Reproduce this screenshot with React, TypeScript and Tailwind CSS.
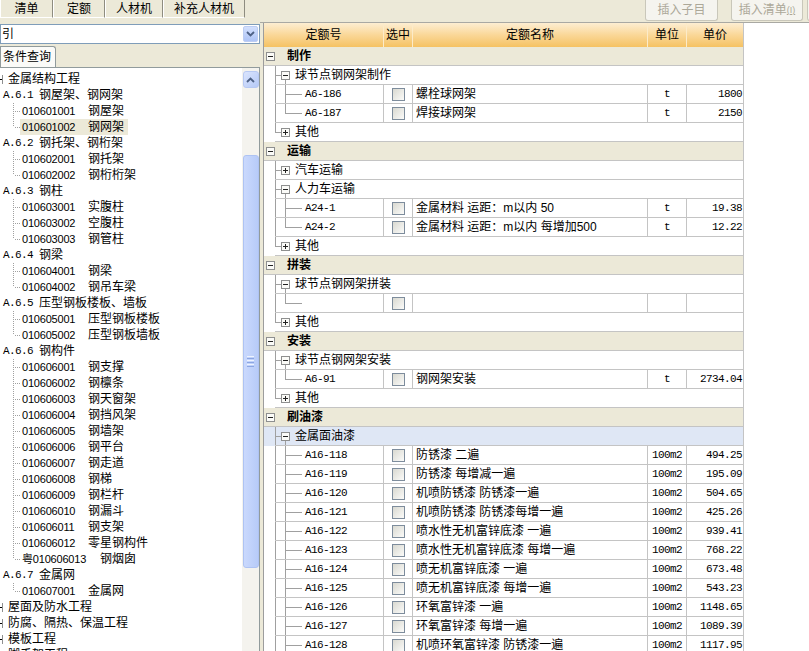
import React from "react";

type GridRow =
  | { k: "g"; name: string }
  | { k: "s"; name: string; plus?: boolean; last?: boolean; sel?: boolean }
  | { k: "l"; code: string; name: string; unit: string; price: string; last?: boolean };

type TreeRow =
  | { k: "top"; text: string }
  | { k: "ch"; code: string; text: string }
  | { k: "leaf"; code: string; text: string; last?: boolean; sel?: boolean };

const paint: [string, string, string][] = [
  ["A16-118", "防锈漆 二遍", "494.25"],
  ["A16-119", "防锈漆 每增减一遍", "195.09"],
  ["A16-120", "机喷防锈漆 防锈漆一遍", "504.65"],
  ["A16-121", "机喷防锈漆 防锈漆每增一遍", "425.26"],
  ["A16-122", "喷水性无机富锌底漆 一遍", "939.41"],
  ["A16-123", "喷水性无机富锌底漆 每增一遍", "768.22"],
  ["A16-124", "喷无机富锌底漆 一遍", "673.48"],
  ["A16-125", "喷无机富锌底漆 每增一遍", "543.23"],
  ["A16-126", "环氧富锌漆 一遍", "1148.65"],
  ["A16-127", "环氧富锌漆 每增一遍", "1089.39"],
  ["A16-128", "机喷环氧富锌漆 防锈漆一遍", "1117.95"],
];

const gridRows: GridRow[] = [
  { k: "g", name: "制作" },
  { k: "s", name: "球节点钢网架制作" },
  { k: "l", code: "A6-186", name: "螺栓球网架", unit: "t", price: "1800" },
  { k: "l", code: "A6-187", name: "焊接球网架", unit: "t", price: "2150", last: true },
  { k: "s", name: "其他", plus: true, last: true },
  { k: "g", name: "运输" },
  { k: "s", name: "汽车运输", plus: true },
  { k: "s", name: "人力车运输" },
  { k: "l", code: "A24-1", name: "金属材料 运距：m以内 50", unit: "t", price: "19.38" },
  { k: "l", code: "A24-2", name: "金属材料 运距：m以内 每增加500", unit: "t", price: "12.22", last: true },
  { k: "s", name: "其他", plus: true, last: true },
  { k: "g", name: "拼装" },
  { k: "s", name: "球节点钢网架拼装" },
  { k: "l", code: "", name: "", unit: "", price: "", last: true },
  { k: "s", name: "其他", plus: true, last: true },
  { k: "g", name: "安装" },
  { k: "s", name: "球节点钢网架安装" },
  { k: "l", code: "A6-91", name: "钢网架安装", unit: "t", price: "2734.04", last: true },
  { k: "s", name: "其他", plus: true, last: true },
  { k: "g", name: "刷油漆" },
  { k: "s", name: "金属面油漆", sel: true },
  ...paint.map(([code, name, price]) => ({ k: "l" as const, code, name, unit: "100m2", price })),
];

const chapters: [string, string, [string, string][]][] = [
  ["A.6.1", "钢屋架、钢网架", [["010601001", "钢屋架"], ["010601002", "钢网架"]]],
  ["A.6.2", "钢托架、钢桁架", [["010602001", "钢托架"], ["010602002", "钢桁桁架"]]],
  ["A.6.3", "钢柱", [["010603001", "实腹柱"], ["010603002", "空腹柱"], ["010603003", "钢管柱"]]],
  ["A.6.4", "钢梁", [["010604001", "钢梁"], ["010604002", "钢吊车梁"]]],
  ["A.6.5", "压型钢板楼板、墙板", [["010605001", "压型钢板楼板"], ["010605002", "压型钢板墙板"]]],
  [
    "A.6.6",
    "钢构件",
    [
      ["010606001", "钢支撑"],
      ["010606002", "钢檩条"],
      ["010606003", "钢天窗架"],
      ["010606004", "钢挡风架"],
      ["010606005", "钢墙架"],
      ["010606006", "钢平台"],
      ["010606007", "钢走道"],
      ["010606008", "钢梯"],
      ["010606009", "钢栏杆"],
      ["010606010", "钢漏斗"],
      ["010606011", "钢支架"],
      ["010606012", "零星钢构件"],
      ["粤010606013", "钢烟囱"],
    ],
  ],
  ["A.6.7", "金属网", [["010607001", "金属网"]]],
];

const treeRows: TreeRow[] = [
  { k: "top", text: "金属结构工程" },
  ...chapters.flatMap(([code, text, leaves]) => [
    { k: "ch" as const, code, text },
    ...leaves.map(([c, t], i) => ({
      k: "leaf" as const,
      code: c,
      text: t,
      last: i === leaves.length - 1,
      sel: c === "010601002",
    })),
  ]),
  { k: "top", text: "屋面及防水工程" },
  { k: "top", text: "防腐、隔热、保温工程" },
  { k: "top", text: "模板工程" },
  { k: "top", text: "脚手架工程" },
];

const Box = ({ plus }: { plus?: boolean }) => (
  <svg width="9" height="9" className="shrink-0">
    <rect x="0.5" y="0.5" width="8" height="8" fill="#fbfbf8" stroke="#8e8f8f" />
    <line x1="2" y1="4.5" x2="7" y2="4.5" stroke="#222" />
    {plus && <line x1="4.5" y1="2" x2="4.5" y2="7" stroke="#222" />}
  </svg>
);

const GroupLine = ({ name }: { name: string }) => (
  <div className="flex h-[19px] items-center border-b border-[#c4c4c4] bg-[#ece9d8] pl-[2px]">
    <Box />
    <span className="ml-[12px] font-bold">{name}</span>
  </div>
);

const SubLine = ({ name, plus, last, sel }: { name: string; plus?: boolean; last?: boolean; sel?: boolean }) => (
  <div className={sel ? "flex h-[19px] bg-[#dfe7f5]" : "flex h-[19px]"}>
    <div className="w-[11px] shrink-0" />
    <div className="flex flex-1 items-center border-b border-[#c4c4c4]">
      <svg width="20" height="18" className="shrink-0">
        <line x1="0.5" y1="0" x2="0.5" y2={last ? 9.5 : 18} stroke="#a0a0a0" />
        <line x1="0" y1="9.5" x2="6" y2="9.5" stroke="#a0a0a0" />
        <rect x="6.5" y="5.5" width="8" height="8" fill="#fbfbf8" stroke="#8e8f8f" />
        <line x1="8" y1="9.5" x2="13" y2="9.5" stroke="#222" />
        {plus && <line x1="10.5" y1="7" x2="10.5" y2="12" stroke="#222" />}
        {!plus && <line x1="10.5" y1="14" x2="10.5" y2="18" stroke="#a0a0a0" />}
      </svg>
      <span>{name}</span>
    </div>
  </div>
);

const mono = "font-[family-name:Liberation_Mono,Noto_Sans_CJK_SC,monospace] text-[11px] tracking-[-0.6px]";

const LeafLine = ({ r }: { r: Extract<GridRow, { k: "l" }> }) => (
  <div className="flex h-[19px]">
    <div className="w-[11px] shrink-0" />
    <div className="flex flex-1 border-b border-[#c4c4c4]">
      <div className="flex w-[109px] shrink-0 items-center border-r border-[#c4c4c4]">
        <svg width="30" height="18" className="shrink-0">
          <line x1="0.5" y1="0" x2="0.5" y2="18" stroke="#a0a0a0" />
          <line x1="10.5" y1="0" x2="10.5" y2={r.last ? 9.5 : 18} stroke="#a0a0a0" />
          <line x1="10" y1="9.5" x2="27" y2="9.5" stroke="#a0a0a0" />
        </svg>
        <span className={mono}>{r.code}</span>
      </div>
      <div className="flex w-[29px] shrink-0 items-center justify-center border-r border-[#c4c4c4]">
        <span className="h-[13px] w-[13px] border border-[#7d8c9c] bg-linear-to-br from-[#d9d9d1] to-[#fbfbf9]" />
      </div>
      <div className="flex w-[235px] shrink-0 items-center overflow-hidden whitespace-pre border-r border-[#c4c4c4] pl-[3px]">
        {r.name}
      </div>
      <div className={"flex w-[39px] shrink-0 items-center justify-center border-r border-[#c4c4c4] " + mono}>
        {r.unit}
      </div>
      <div className={"flex w-[56px] shrink-0 items-center justify-end pr-[1px] " + mono}>{r.price}</div>
    </div>
  </div>
);

const TreeLine = ({ r }: { r: TreeRow }) => {
  if (r.k === "top")
    return (
      <div className="flex h-[16px] items-center whitespace-nowrap">
        <svg width="3" height="16" className="shrink-0">
          <line x1="2.5" y1="4" x2="2.5" y2="13" stroke="#8e8f8f" />
          <rect x="0" y="8" width="2" height="1" fill="#000" />
        </svg>
        <span className="ml-[5px]">{r.text}</span>
      </div>
    );
  if (r.k === "ch")
    return (
      <div className="flex h-[16px] items-center whitespace-pre pl-[3px]">
        <span className={mono}>{r.code + " "}</span>
        <span>{r.text}</span>
      </div>
    );
  return (
    <div className="flex h-[16px] items-center whitespace-nowrap">
      <svg width="20" height="16" className="shrink-0">
        <line x1="13.5" y1="0" x2="13.5" y2={r.last ? 8 : 16} stroke="#a0a0a0" strokeDasharray="1 1" />
        <line x1="15" y1="8.5" x2="20" y2="8.5" stroke="#a0a0a0" strokeDasharray="1 1" />
      </svg>
      <span
        className={
          r.sel
            ? "flex h-[16px] items-center bg-[#ece9d8] pl-[2px] pr-[4px]"
            : "flex h-[16px] items-center pl-[2px] pr-[4px]"
        }
      >
        <span className={r.code.startsWith("粤") ? "w-[78px] text-[11px] tracking-[-0.2px]" : "w-[66px] text-[11px] tracking-[-0.2px]"}>
          {r.code}
        </span>
        <span>{r.text}</span>
      </span>
    </div>
  );
};

const Chevron = ({ up }: { up?: boolean }) => (
  <svg width="9" height="6">
    <polyline
      points={up ? "1,5 4.5,1.5 8,5" : "1,1 4.5,4.5 8,1"}
      fill="none"
      stroke="#4d6185"
      strokeWidth="1.8"
    />
  </svg>
);

export default function App() {
  return (
    <div className="flex h-[651px] w-[809px] overflow-hidden bg-[#ece9d8] font-[family-name:Liberation_Sans,Noto_Sans_CJK_SC,sans-serif] text-[12px] leading-[16px] text-black">
      {/* left column */}
      <div className="flex w-[260px] shrink-0 flex-col">
        <div className="flex h-[18px] shrink-0">
          {[
            ["清单", "w-[53px]"],
            ["定额", "w-[52px]"],
            ["人材机", "w-[58px]"],
            ["补充人材机", "w-[82px]"],
          ].map(([t, w]) => (
            <div
              key={t}
              className={
                "flex items-center justify-center border-b border-l border-r border-b-white border-l-white border-r-[#8e8c80] " +
                w
              }
            >
              {t}
            </div>
          ))}
        </div>
        <div className="mt-[6px] flex h-[20px] shrink-0 items-center border border-[#7f9db9] bg-white">
          <span className="pl-[1px]">引</span>
          <div className="ml-auto mr-[1px] flex h-[16px] w-[15px] items-center justify-center rounded-[2px] border border-[#bccdf3] bg-linear-to-b from-[#d3e0fd] to-[#aec4f6]">
            <Chevron />
          </div>
        </div>
        <div className="mt-[2px] flex h-[21px] shrink-0">
          <div className="flex w-[56px] items-center rounded-tr-[3px] border-l border-r border-t border-[#919b9c] bg-[#fbfbf8] pl-[2px]">
            条件查询
          </div>
        </div>
        <div className="flex min-h-0 flex-1 border-r border-t border-[#919b9c] bg-white">
          <div className="min-w-0 flex-1 overflow-hidden pt-[3px]">
            {treeRows.map((r, i) => (
              <TreeLine key={i} r={r} />
            ))}
          </div>
          <div className="flex w-[17px] shrink-0 flex-col items-center bg-[#f4f3ee] pt-[3px]">
            <div className="flex h-[17px] w-[16px] items-center justify-center rounded-[3px] border border-[#b7c9f3] bg-linear-to-br from-[#dbe5fd] to-[#b5c9f7]">
              <Chevron up />
            </div>
            <div className="mt-[67px] flex h-[413px] w-[16px] flex-col items-center justify-center gap-[1px] rounded-[3px] border border-[#aec3f3] bg-linear-to-r from-[#cad9fd] to-[#b7cbf8]">
              <span className="h-px w-[7px] bg-[#eef3fe]" />
              <span className="h-px w-[7px] bg-[#8ca6e2]" />
              <span className="h-px w-[7px] bg-[#eef3fe]" />
              <span className="h-px w-[7px] bg-[#8ca6e2]" />
              <span className="h-px w-[7px] bg-[#eef3fe]" />
              <span className="h-px w-[7px] bg-[#8ca6e2]" />
            </div>
          </div>
        </div>
      </div>

      {/* right column */}
      <div className="flex min-w-0 flex-1 flex-col">
        <div className="flex h-[23px] shrink-0 border-b border-[#a9a9a3] pl-[385px]">
          <div className="flex h-[21px] w-[73px] shrink-0 items-center justify-center rounded-b-[3px] border border-t-0 border-[#c9c7ba] bg-[#f5f4ef] text-[#aca899]">
            插入子目
          </div>
          <div className="ml-[13px] flex h-[21px] w-[72px] shrink-0 items-center justify-center rounded-b-[3px] border border-t-0 border-[#c9c7ba] bg-[#f5f4ef] text-[#aca899]">
            插入清单<span className="text-[9px] underline">(I)</span>
          </div>
          <div className="ml-[4px] h-[21px] w-[40px] shrink-0 rounded-b-[3px] border border-t-0 border-[#c9c7ba] bg-[#f5f4ef]" />
        </div>
        <div className="flex min-h-0 flex-1">
          <div className="w-[3px] shrink-0" />
          <div className="w-[481px] shrink-0 overflow-hidden border-l border-r border-l-[#9d9d9d] border-r-[#c4c4c4] bg-white">
            <div className="flex h-[24px] bg-linear-to-b from-[#fdeed2] via-[#fad797] to-[#f5c262]">
              <div className="flex w-[120px] items-center justify-center border-r border-[#fcebc9]">定额号</div>
              <div className="flex w-[29px] items-center justify-center border-r border-[#fcebc9]">选中</div>
              <div className="flex w-[235px] items-center justify-center border-r border-[#fcebc9]">定额名称</div>
              <div className="flex w-[39px] items-center justify-center border-r border-[#fcebc9]">单位</div>
              <div className="flex w-[56px] items-center justify-center">单价</div>
            </div>
            {gridRows.map((r, i) =>
              r.k === "g" ? (
                <GroupLine key={i} name={r.name} />
              ) : r.k === "s" ? (
                <SubLine key={i} name={r.name} plus={r.plus} last={r.last} sel={r.sel} />
              ) : (
                <LeafLine key={i} r={r} />
              )
            )}
          </div>
          <div className="flex-1 bg-white" />
        </div>
      </div>
    </div>
  );
}
